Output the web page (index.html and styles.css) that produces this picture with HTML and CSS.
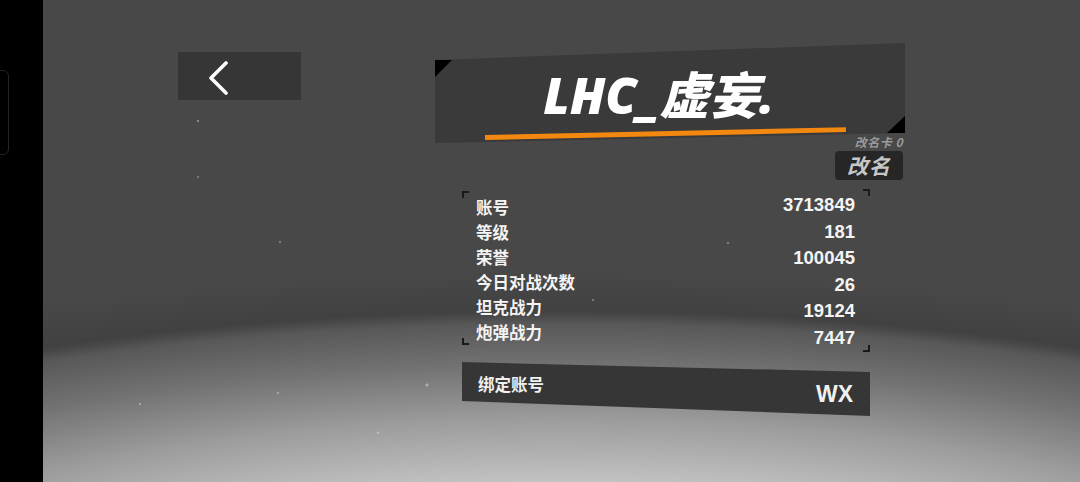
FILE: index.html
```html
<!DOCTYPE html>
<html lang="zh-CN">
<head>
<meta charset="utf-8">
<title>账号信息</title>
<link rel="stylesheet" href="styles.css">
</head>
<body>
<div class="screen">
  <div class="sidebar"><div class="notch"></div></div>
  <div class="stage">
    <div class="back-btn">
      <svg width="22" height="34" viewBox="0 0 22 34"><polyline points="18,2 3,17 18,32" fill="none" stroke="#fff" stroke-width="3.6" stroke-linecap="round" stroke-linejoin="round"/></svg>
    </div>
    <div class="main">
      <div class="title-panel">
        <div class="name">LHC_虚妄.</div>
        <div class="accent"></div>
      </div>
      <div class="rename">
        <div class="rename-card">改名卡 0</div>
        <div class="rename-btn">改名</div>
      </div>
      <div class="stats">
        <div class="labels">
          <div>账号</div>
          <div>等级</div>
          <div>荣誉</div>
          <div>今日对战次数</div>
          <div>坦克战力</div>
          <div>炮弹战力</div>
        </div>
        <div class="values">
          <div>3713849</div>
          <div>181</div>
          <div>100045</div>
          <div>26</div>
          <div>19124</div>
          <div>7447</div>
        </div>
      </div>
      <div class="bind">
        <div class="bind-label">绑定账号</div>
        <div class="bind-value">WX</div>
      </div>
    </div>
  </div>
</div>
</body>
</html>
```

FILE: styles.css
```css
html, body {
  margin: 0;
  padding: 0;
  width: 1080px;
  height: 482px;
  overflow: hidden;
  background: #000;
}
.screen {
  display: flex;
  width: 1080px;
  height: 482px;
  font-family: "Noto Sans CJK SC", "Noto Sans", sans-serif;
}
.sidebar {
  width: 43px;
  flex: none;
  background: #000;
  padding-top: 70px;
  box-sizing: border-box;
}
.notch {
  width: 14px;
  height: 83px;
  margin-left: -7px;
  border: 1.5px solid #1f252d;
  border-radius: 6px;
}
.stage {
  flex: 1;
  display: flex;
  align-items: flex-start;
  background:
    radial-gradient(circle at 155px 121px, rgba(255,255,255,.35) 0 1px, transparent 1.6px),
    radial-gradient(circle at 237px 242px, rgba(255,255,255,.3) 0 1px, transparent 1.6px),
    radial-gradient(circle at 155px 177px, rgba(255,255,255,.25) 0 1px, transparent 1.6px),
    radial-gradient(circle at 685px 243px, rgba(255,255,255,.3) 0 1px, transparent 1.6px),
    radial-gradient(circle at 550px 300px, rgba(255,255,255,.3) 0 1px, transparent 1.6px),
    radial-gradient(circle at 384px 385px, rgba(255,255,255,.4) 0 1.2px, transparent 1.8px),
    radial-gradient(circle at 97px 404px, rgba(255,255,255,.35) 0 1px, transparent 1.6px),
    radial-gradient(circle at 235px 393px, rgba(255,255,255,.3) 0 1px, transparent 1.6px),
    radial-gradient(circle at 335px 433px, rgba(255,255,255,.3) 0 1px, transparent 1.6px),
    radial-gradient(ellipse 1217px 390px at 518px 700px, #d2d2d2 0%, #c2c2c2 56%, #9c9c9c 72%, #727272 86%, #585858 96.5%, #464646 99%, #414141 100%, #484848 110%);
}
.back-btn {
  flex: none;
  width: 123px;
  height: 48px;
  margin: 52px 0 0 135px;
  background: #363636;
  display: flex;
  align-items: center;
  padding-left: 30px;
  box-sizing: border-box;
}
.back-btn svg {
  display: block;
  margin-top: 4px;
}
.main {
  flex: none;
  width: 470px;
  margin: 43px 0 0 134px;
  display: flex;
  flex-direction: column;
}
.title-panel {
  position: relative;
  height: 100px;
  background: #3a3a3a;
  clip-path: polygon(0 17px, 100% 0, 100% 90px, 0 100px);
  display: flex;
  flex-direction: column;
  align-items: center;
}
.title-panel::before {
  content: "";
  position: absolute;
  left: 0;
  top: 17px;
  width: 17px;
  height: 17px;
  background: #000;
  clip-path: polygon(0 0, 100% 0, 0 100%);
}
.title-panel::after {
  content: "";
  position: absolute;
  right: 0;
  top: 73px;
  width: 18px;
  height: 17px;
  background: #000;
  clip-path: polygon(100% 0, 100% 100%, 0 100%);
}
.name {
  margin-top: 21px;
  font-family: "Open Sans", "Noto Sans CJK SC", sans-serif;
  font-weight: 800;
  font-style: italic;
  font-size: 50px;
  line-height: 62px;
  color: #fff;
  letter-spacing: 0;
  padding-right: 22px;
}
.accent {
  align-self: flex-start;
  margin-left: 50px;
  margin-top: 9px;
  width: 361px;
  height: 4.5px;
  background: #f2880f;
  transform: rotate(-1.25deg);
  transform-origin: left center;
}
.rename {
  display: flex;
  flex-direction: column;
  align-items: flex-end;
  padding-right: 2px;
  margin-top: -8px;
}
.rename-card {
  font-size: 12px;
  line-height: 14px;
  font-style: italic;
  font-weight: 700;
  color: #9a9a9a;
  letter-spacing: 0.5px;
}
.rename-btn {
  margin-top: 2px;
  width: 68px;
  height: 29px;
  background: #262626;
  border-radius: 4px;
  color: #c6c6c6;
  font-size: 21px;
  font-weight: 700;
  font-style: italic;
  line-height: 29px;
  text-align: center;
  letter-spacing: 1px;
}
.stats {
  margin: 9px 35px 0 27px;
  height: 163px;
  box-sizing: border-box;
  padding: 0 15px 0 14px;
  display: flex;
  justify-content: space-between;
  background:
    linear-gradient(#1a1a1a, #1a1a1a) left 0 top 2px / 7px 2px no-repeat,
    linear-gradient(#1a1a1a, #1a1a1a) left 0 top 2px / 2px 7px no-repeat,
    linear-gradient(#1a1a1a, #1a1a1a) right 0 top 0 / 7px 2px no-repeat,
    linear-gradient(#1a1a1a, #1a1a1a) right 0 top 0 / 2px 7px no-repeat,
    linear-gradient(#1a1a1a, #1a1a1a) left 0 bottom 7px / 7px 2px no-repeat,
    linear-gradient(#1a1a1a, #1a1a1a) left 0 bottom 7px / 2px 7px no-repeat,
    linear-gradient(#1a1a1a, #1a1a1a) right 0 bottom 0 / 7px 2px no-repeat,
    linear-gradient(#1a1a1a, #1a1a1a) right 0 bottom 0 / 2px 7px no-repeat;
}
.labels {
  padding-top: 6px;
  font-size: 16.5px;
  line-height: 25px;
  font-weight: 700;
  color: #f4f4f4;
}
.values {
  padding-top: 3px;
  text-align: right;
  font-family: "Liberation Sans", Arial, sans-serif;
  font-size: 18.5px;
  line-height: 26.6px;
  font-weight: 700;
  color: #f4f4f4;
}
.bind {
  margin: 10px 35px 0 27px;
  height: 54px;
  background: #363636;
  clip-path: polygon(0 0, 100% 10px, 100% 100%, 0 39px);
  display: flex;
  justify-content: space-between;
  padding: 0 17px 0 16px;
}
.bind-label {
  padding-top: 10px;
  font-size: 16.5px;
  line-height: 24px;
  font-weight: 700;
  color: #f0f0f0;
}
.bind-value {
  padding-top: 18px;
  font-family: "Liberation Sans", Arial, sans-serif;
  font-size: 23px;
  line-height: 28px;
  font-weight: 700;
  color: #f0f0f0;
}
```
